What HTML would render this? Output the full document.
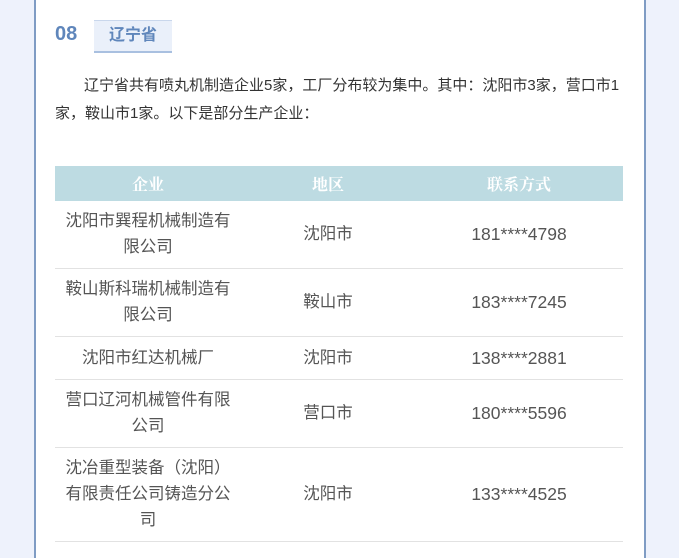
<!DOCTYPE html>
<html><head><meta charset="utf-8"><style>
html,body{margin:0;padding:0;width:679px;height:541px;overflow:hidden;background:#eef2fc;font-family:"Liberation Sans","Noto Sans CJK SC",sans-serif;}
.card{position:absolute;left:34px;top:-2px;width:608px;height:560px;background:#fff;border-left:2px solid #7f9cc4;border-right:2px solid #7f9cc4;}
.num{position:absolute;left:55px;top:23px;font-size:20px;font-weight:bold;color:#5f86bb;}
.tag{position:absolute;left:94px;top:20px;width:78px;height:30px;background:#eaf0fa;border-bottom:2px solid #a9c0e0;border-top:1px solid #c9d7ec;color:#5f86bb;font-weight:bold;font-size:16px;text-align:center;line-height:30px;}
.p{position:absolute;left:55px;top:72px;width:570px;font-size:15px;color:#333;line-height:28px;text-indent:29px;}
table{position:absolute;left:55px;top:166px;width:568px;border-collapse:collapse;font-size:16.5px;color:#555;}
th{background:#bddbe2;color:#fff;height:35px;padding:0;font-weight:bold;font-size:16px;font-family:"Liberation Serif","Noto Serif CJK SC",serif;}
td{text-align:center;border-bottom:1px solid #e2e2e2;line-height:26px;padding:6px 0;}
td:nth-child(3){font-size:17.5px;}
</style></head><body>
<div class="card"></div>
<div class="num">08</div>
<div class="tag">辽宁省</div>
<div class="p">辽宁省共有喷丸机制造企业5家，工厂分布较为集中。其中：沈阳市3家，营口市1家，鞍山市1家。以下是部分生产企业：</div>
<table>
<tr><th style="width:186px">企业</th><th style="width:174px">地区</th><th>联系方式</th></tr>
<tr style="height:67px"><td>沈阳市巽程机械制造有<br>限公司</td><td>沈阳市</td><td>181****4798</td></tr>
<tr style="height:68px"><td>鞍山斯科瑞机械制造有<br>限公司</td><td>鞍山市</td><td>183****7245</td></tr>
<tr style="height:43px"><td>沈阳市红达机械厂</td><td>沈阳市</td><td>138****2881</td></tr>
<tr style="height:68px"><td>营口辽河机械管件有限<br>公司</td><td>营口市</td><td>180****5596</td></tr>
<tr style="height:94px"><td>沈冶重型装备（沈阳）<br>有限责任公司铸造分公<br>司</td><td>沈阳市</td><td>133****4525</td></tr>
</table>
</body></html>
